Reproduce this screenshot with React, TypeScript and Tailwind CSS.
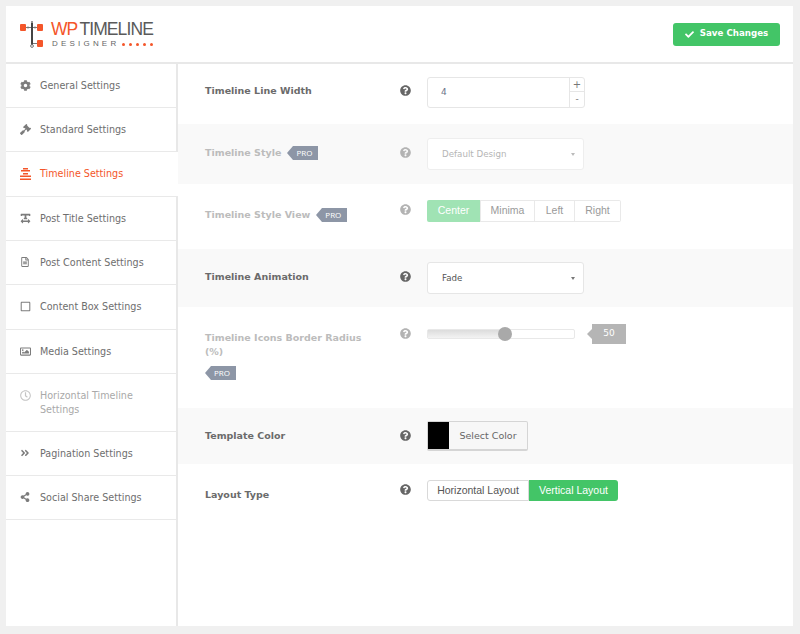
import type { ReactNode } from 'react'
import { FaAngleDoubleRight, FaCheck, FaCog, FaGavel, FaQuestionCircle, FaRegClock, FaRegFileAlt, FaRegImage, FaRegSquare, FaShareAlt, FaTextWidth } from 'react-icons/fa'

function ProTag() {
  return (
    <span className="inline-flex items-center font-normal">
      <span className="w-0 h-0 border-y-[7px] border-y-transparent border-r-[6px] border-r-[#8d96a6]" />
      <span className="bg-[#8d96a6] text-white text-[8px] tracking-normal h-[14px] leading-[14px] pl-[3px] pr-[6px] font-['Open_Sans',sans-serif]">PRO</span>
    </span>
  )
}

function TimelineIcon() {
  return (
    <svg width="11" height="12" viewBox="0 0 11 12" fill="currentColor">
      <rect x="3" y="0" width="5" height="1.500" />
      <rect x="1" y="2" width="9" height="1.500" />
      <rect x="3" y="5" width="5" height="1.500" />
      <rect x="0" y="7.500" width="11" height="1.500" />
      <rect x="0" y="10.500" width="11" height="1.500" />
    </svg>
  )
}

const menu = [
  { label: 'General Settings', icon: <FaCog size={11} />, h: 'h-[44px]' },
  { label: 'Standard Settings', icon: <FaGavel size={11} />, h: 'h-[44px]' },
  { label: 'Timeline Settings', icon: <TimelineIcon />, h: 'h-[45px]', active: true },
  { label: 'Post Title Settings', icon: <FaTextWidth size={11} />, h: 'h-[44px]' },
  { label: 'Post Content Settings', icon: <FaRegFileAlt size={10} />, h: 'h-[44px]' },
  { label: 'Content Box Settings', icon: <FaRegSquare size={11} />, h: 'h-[45px]' },
  { label: 'Media Settings', icon: <FaRegImage size={11} />, h: 'h-[44px]' },
  { label: 'Horizontal Timeline Settings', icon: <FaRegClock size={11} />, h: 'h-[58px]', faded: true },
  { label: 'Pagination Settings', icon: <FaAngleDoubleRight size={10} />, h: 'h-[44px]' },
  { label: 'Social Share Settings', icon: <FaShareAlt size={10} />, h: 'h-[44px]' },
]

function Sidebar() {
  return (
    <aside className="w-[172px] shrink-0 border-r-2 border-[#e8e8e8]">
      {menu.map((m) => (
        <div
          key={m.label}
          className={`${m.h} flex items-center pl-[14px] pr-[20px] text-[9.600px] leading-[14px] border-b border-[#e9e9e9] ${
            m.active ? 'text-[#f4562a] w-[172px] bg-white relative' : m.faded ? 'text-[#a9a9a9]' : 'text-[#6e6e6e]'
          }`}
        >
          <span className={`w-[20px] shrink-0 flex self-start pt-[16px] ${m.active ? '' : m.faded ? 'text-[#c4c4c4]' : 'text-[#7c7c7c]'}`}>{m.icon}</span>
          <span>{m.label}</span>
        </div>
      ))}
    </aside>
  )
}

type RowProps = {
  h: string
  gray?: boolean
  label: string
  faded?: boolean
  labelTop: string
  helpTop: string
  top: string
  children: ReactNode
  extra?: ReactNode
}

function Row({ h, gray, label, faded, labelTop, helpTop, top, children, extra }: RowProps) {
  return (
    <div className={`${h} flex pl-[27px] ${gray ? 'bg-[#f9f9f9]' : ''}`}>
      <div className={`w-[195px] shrink-0 pr-[30px] ${labelTop} text-[9.500px] leading-[14px] font-bold ${faded ? 'text-[#bcbcbc]' : 'text-[#6b6b6b]'}`}>
        <div className="flex items-center gap-x-[6px] flex-wrap">{label}{extra}</div>
      </div>
      <div className={`w-[27px] shrink-0 ${helpTop} ${faded ? 'text-[#b3b3b3]' : 'text-[#666666]'}`}><FaQuestionCircle size={11} /></div>
      <div className={top}>{children}</div>
    </div>
  )
}

function Select({ value, faded }: { value: string; faded?: boolean }) {
  return (
    <div className={`w-[157px] h-[32px] flex items-center justify-between pl-[14px] pr-[8px] bg-white rounded-[3px] border text-[8.700px] ${faded ? 'text-[#b5b5b5] border-[#eeeeee]' : 'text-[#555555] border-[#e6e6e6]'}`}>
      <span className="pt-px">{value}</span>
      <span className={`w-0 h-0 border-x-[2.500px] border-x-transparent border-t-[3px] ${faded ? 'border-t-[#bbbbbb]' : 'border-t-[#777777]'}`} />
    </div>
  )
}

export default function App() {
  return (
    <div className="font-['DejaVu_Sans',sans-serif] w-[800px] h-[634px] bg-[#f0f0f0] pt-[6px] pl-[6px] pr-[7px]">
      <div className="w-[787px] h-[620px] bg-white flex flex-col">
        <header className="h-[58px] shrink-0 border-b-2 border-[#e8e8e8] flex items-center justify-between pl-[14px] pr-[13px]">
          <div className="flex items-center gap-[7px]">
            <svg width="24" height="27" viewBox="0 0 24 27">
              <rect x="0" y="3" width="6" height="7" rx="1" fill="#f4562a" />
              <rect x="17" y="3" width="6" height="7" rx="1" fill="#f4562a" />
              <rect x="17" y="19" width="6" height="7" rx="1" fill="#f4562a" />
              <path d="M6 6.500h11M13 22.500h4" stroke="#777777" strokeWidth="1" fill="none" />
              <rect x="11" y="2" width="2" height="22" fill="#444444" />
              <circle cx="8" cy="6.500" r="1" fill="#777777" />
              <circle cx="15" cy="6.500" r="1" fill="#777777" />
              <circle cx="12" cy="1" r="1" fill="#777777" />
              <circle cx="12" cy="25" r="1.400" fill="#fff" stroke="#555555" strokeWidth=".8" />
            </svg>
            <div className="leading-none font-['Liberation_Sans',sans-serif]">
              <div className="text-[17.500px] h-[20px] leading-[20px] tracking-[-0.9px] flex">
                <span className="text-[#f4562a] mr-[2px]">WP</span>
                <span className="text-[#5a5a5a]">TIMELINE</span>
              </div>
              <div className="flex items-center h-[10px] pl-[1px] text-[8px] leading-[10px] text-[#666666] tracking-[3.200px]">
                DESIGNER
                <span className="flex gap-[4px] ml-[3px]">
                  {[0, 1, 2, 3, 4].map((i) => (
                    <span key={i} className="w-[3px] h-[3px] rounded-full bg-[#f4562a]" />
                  ))}
                </span>
              </div>
            </div>
          </div>
          <button className="w-[107px] h-[23px] bg-[#43c567] rounded-[3px] text-white text-[8.700px] font-bold flex items-center justify-center gap-[6px]">
            <FaCheck size={9} />
            Save Changes
          </button>
        </header>
        <div className="flex flex-1 min-h-0">
          <Sidebar />
          <main className="flex-1 min-w-0">
            <Row h="h-[60px]" label="Timeline Line Width" labelTop="pt-[20px]" helpTop="pt-[21px]" top="pt-[13px]">
              <div className="w-[158px] h-[31px] flex border border-[#e6e6e6] rounded-[3px] text-[9px] text-[#6a7388]">
                <span className="flex-1 flex items-center pl-[13px]">4</span>
                <span className="w-[15px] border-l border-[#e6e6e6] flex flex-col text-[#777777] leading-none">
                  <span className="h-[14px] flex items-center justify-center border-b border-[#e6e6e6] text-[10px]">+</span>
                  <span className="flex-1 flex items-center justify-center text-[9px]">-</span>
                </span>
              </div>
            </Row>
            <Row h="h-[60px]" gray faded label="Timeline Style" labelTop="pt-[22px]" helpTop="pt-[23px]" top="pt-[14px]" extra={<ProTag />}>
              <Select value="Default Design" faded />
            </Row>
            <Row h="h-[65px]" faded label="Timeline Style View" labelTop="pt-[24px]" helpTop="pt-[20px]" top="pt-[16px]" extra={<ProTag />}>
              <div className="flex font-['Liberation_Sans',sans-serif] text-[10.500px] text-[#9a9a9a] h-[22px]">
                <span className="w-[53px] bg-[#a0e3b4] text-white rounded-l-[2px] flex items-center justify-center">Center</span>
                <span className="w-[55px] border border-[#e9e9e9] flex items-center justify-center">Minima</span>
                <span className="w-[40px] border border-l-0 border-[#e9e9e9] flex items-center justify-center">Left</span>
                <span className="w-[46px] border border-l-0 border-[#e9e9e9] rounded-r-[2px] flex items-center justify-center">Right</span>
              </div>
            </Row>
            <Row h="h-[58px]" gray label="Timeline Animation" labelTop="pt-[21px]" helpTop="pt-[22px]" top="pt-[13px]">
              <Select value="Fade" />
            </Row>
            <Row h="h-[101px]" faded label="Timeline Icons Border Radius (%)" labelTop="pt-[24px]" helpTop="pt-[21px]" top="pt-[17px]" extra={<div className="mt-[7px]"><ProTag /></div>}>
              <div className="flex items-center">
                <div className="relative w-[148px] h-[10px] border border-[#e8e8e8] rounded-[2px]">
                  <div className="w-[77px] h-full bg-linear-to-b from-[#dcdcdc] to-[#f3f3f3]" />
                  <span className="absolute left-[70px] -top-[3px] w-[14px] h-[14px] rounded-full bg-[#a9a9a9]" />
                </div>
                <span className="ml-[12px] w-0 h-0 border-y-[5px] border-y-transparent border-r-[5px] border-r-[#b5b5b5]" />
                <span className="w-[34px] h-[20px] bg-[#b5b5b5] text-white text-[9px] flex items-center justify-center">50</span>
              </div>
            </Row>
            <Row h="h-[56px]" gray label="Template Color" labelTop="pt-[21px]" helpTop="pt-[22px]" top="pt-[13px]">
              <div className="w-[101px] h-[30px] flex border border-[#d5d5d5] border-b-[2px] rounded-[2px] bg-[#f7f7f7] text-[9.500px] text-[#666666]">
                <span className="w-[21px] bg-black shrink-0" />
                <span className="flex-1 flex items-center justify-center pt-px">Select Color</span>
              </div>
            </Row>
            <Row h="h-[50px]" label="Layout Type" labelTop="pt-[24px]" helpTop="pt-[20px]" top="pt-[16px]">
              <div className="flex font-['Liberation_Sans',sans-serif] text-[10.500px] h-[21px]">
                <span className="w-[102px] border border-[#d9d9d9] rounded-l-[3px] text-[#555555] flex items-center justify-center">Horizontal Layout</span>
                <span className="w-[89px] bg-[#43c567] text-white rounded-r-[3px] flex items-center justify-center">Vertical Layout</span>
              </div>
            </Row>
          </main>
        </div>
      </div>
    </div>
  )
}
